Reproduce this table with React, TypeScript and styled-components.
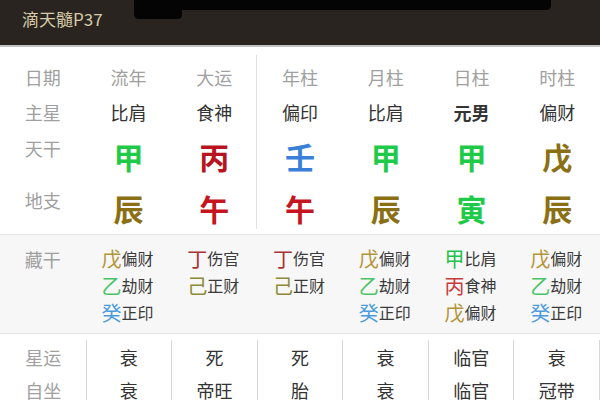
import React from "react";
import styled, { createGlobalStyle } from "styled-components";

const Global = createGlobalStyle`
  html, body { margin: 0; padding: 0; background: #ffffff; }
  body { font-family: "Noto Sans CJK SC", "Noto Sans", sans-serif; width: 600px; overflow: hidden; }
`;

const Page = styled.div`
  width: 600px;
  height: 400px;
  overflow: hidden;
  background: #ffffff;
`;

const Header = styled.div`
  position: relative;
  height: 45px;
  background: #29241f;
  border-bottom: 2px solid #c2c2c2;
  display: flex;
  align-items: flex-start;
  padding-left: 22px;
`;

const Title = styled.div`
  margin-top: 7px;
  font-size: 17px;
  line-height: 24px;
  color: #d6cba8;
  letter-spacing: 0px;
  position: relative;
  z-index: 1;
`;

const Overlay = styled.svg`
  position: absolute;
  left: 0;
  top: 0;
`;

const TopSection = styled.div`
  display: flex;
  padding: 8px 0 5px;
  border-bottom: 1px solid #e6e6e6;
`;

const Column = styled.div<{ $divider?: boolean }>`
  flex: 1 1 0;
  display: flex;
  flex-direction: column;
  align-items: center;
  border-left: ${(p) => (p.$divider ? "1px solid #e2e2e2" : "none")};
  margin-left: ${(p) => (p.$divider ? "-1px" : "0")};
`;

const Cell = styled.div<{ $h: number; $pt?: number }>`
  height: ${(p) => p.$h}px;
  padding-top: ${(p) => p.$pt ?? 0}px;
  box-sizing: border-box;
  display: flex;
  align-items: ${(p) => (p.$pt ? "flex-start" : "center")};
  justify-content: center;
`;

const Label = styled.span`
  font-size: 18px;
  line-height: 20px;
  color: #a0a0a0;
`;

const Value = styled.span<{ $bold?: boolean }>`
  font-size: 18px;
  line-height: 20px;
  color: #333333;
  font-weight: ${(p) => (p.$bold ? 700 : 400)};
`;

const Big = styled.span<{ $c: string }>`
  font-size: 30px;
  line-height: 36px;
  font-weight: 700;
  color: ${(p) => p.$c};
  margin-top: 0;
`;

const HiddenSection = styled.div`
  display: flex;
  background: #f7f7f7;
  padding: 10px 0 7px;
  height: 98px;
  box-sizing: border-box;
`;

const HiddenCol = styled.div`
  flex: 1 1 0;
  display: flex;
  flex-direction: column;
  align-items: center;
`;

const HiddenItem = styled.div`
  height: 27px;
  display: flex;
  align-items: center;
  width: 54px;
`;

const Stem = styled.span<{ $c: string }>`
  font-size: 20px;
  line-height: 27px;
  color: ${(p) => p.$c};
`;

const God = styled.span`
  font-size: 16px;
  line-height: 27px;
  color: #3a3a3a;
`;

const BottomSection = styled.div`
  display: flex;
  border-top: 1px solid #e4e4e4;
  padding-top: 6px;
  background: #ffffff;
`;

const BottomCol = styled.div<{ $left?: boolean; $right?: boolean }>`
  flex: 1 1 0;
  display: flex;
  flex-direction: column;
  align-items: center;
  border-left: ${(p) => (p.$left ? "1px solid #d8d8d8" : "1px solid transparent")};
  border-right: ${(p) => (p.$right ? "1px solid #d8d8d8" : "none")};
  height: 70px;
`;

const BottomCell = styled.div`
  height: 33px;
  display: flex;
  align-items: center;
  justify-content: center;
`;

const C = {
  green: "#1fca48",
  red: "#b8141f",
  red2: "#c41520",
  blue: "#3a7fd8",
  olive: "#8a6f14",
};

const H = {
  gold: "#b39437",
  green: "#48c366",
  blue: "#4b9bdc",
  red: "#a83234",
  olive: "#8d8a3a",
  bgreen: "#24c24c",
  bred: "#c93a3c",
};

type Top = { head: string; star: string; bold?: boolean; gan: [string, string]; zhi: [string, string] };

const tops: Top[] = [
  { head: "流年", star: "比肩", gan: ["甲", C.green], zhi: ["辰", C.olive] },
  { head: "大运", star: "食神", gan: ["丙", C.red], zhi: ["午", C.red2] },
  { head: "年柱", star: "偏印", gan: ["壬", C.blue], zhi: ["午", C.red2] },
  { head: "月柱", star: "比肩", gan: ["甲", C.green], zhi: ["辰", C.olive] },
  { head: "日柱", star: "元男", bold: true, gan: ["甲", C.green], zhi: ["寅", C.green] },
  { head: "时柱", star: "偏财", gan: ["戊", C.olive], zhi: ["辰", C.olive] },
];

const hidden: [string, string, string][][] = [
  [["戊", H.gold, "偏财"], ["乙", H.green, "劫财"], ["癸", H.blue, "正印"]],
  [["丁", H.red, "伤官"], ["己", H.olive, "正财"]],
  [["丁", H.red, "伤官"], ["己", H.olive, "正财"]],
  [["戊", H.gold, "偏财"], ["乙", H.green, "劫财"], ["癸", H.blue, "正印"]],
  [["甲", H.bgreen, "比肩"], ["丙", H.bred, "食神"], ["戊", H.gold, "偏财"]],
  [["戊", H.gold, "偏财"], ["乙", H.green, "劫财"], ["癸", H.blue, "正印"]],
];

const bottoms: [string, string][] = [
  ["衰", "衰"],
  ["死", "帝旺"],
  ["死", "胎"],
  ["衰", "衰"],
  ["临官", "临官"],
  ["衰", "冠带"],
];

export default function App() {
  return (
    <Page>
      <Global />
      <Header>
        <Overlay width="600" height="45" viewBox="0 0 600 45">
          <path
            d="M134 0 H551 V5 Q551 10 546 10 H182 V15 Q182 19 177 19 H139 Q134 19 134 14 Z"
            fill="#040404"
          />
        </Overlay>
        <Title>滴天髓P37</Title>
      </Header>

      <TopSection>
        <Column>
          <Cell $h={44}><Label>日期</Label></Cell>
          <Cell $h={26}><Label>主星</Label></Cell>
          <Cell $h={52} $pt={13}><Label>天干</Label></Cell>
          <Cell $h={52} $pt={13}><Label>地支</Label></Cell>
        </Column>
        {tops.map((t, i) => (
          <Column key={i} $divider={i === 2}>
            <Cell $h={44}><Label>{t.head}</Label></Cell>
            <Cell $h={26}><Value $bold={t.bold}>{t.star}</Value></Cell>
            <Cell $h={52} $pt={13}><Big $c={t.gan[1]}>{t.gan[0]}</Big></Cell>
            <Cell $h={52} $pt={13}><Big $c={t.zhi[1]}>{t.zhi[0]}</Big></Cell>
          </Column>
        ))}
      </TopSection>

      <HiddenSection>
        <HiddenCol>
          <BottomCell style={{ height: 27 }}><Label>藏干</Label></BottomCell>
        </HiddenCol>
        {hidden.map((col, i) => (
          <HiddenCol key={i}>
            {col.map(([s, c, g], j) => (
              <HiddenItem key={j}>
                <Stem $c={c}>{s}</Stem>
                <God>{g}</God>
              </HiddenItem>
            ))}
          </HiddenCol>
        ))}
      </HiddenSection>

      <BottomSection>
        <BottomCol>
          <BottomCell><Label>星运</Label></BottomCell>
          <BottomCell><Label>自坐</Label></BottomCell>
        </BottomCol>
        {bottoms.map(([a, b], i) => (
          <BottomCol key={i} $left $right={i === bottoms.length - 1}>
            <BottomCell><Value>{a}</Value></BottomCell>
            <BottomCell><Value>{b}</Value></BottomCell>
          </BottomCol>
        ))}
      </BottomSection>
    </Page>
  );
}
